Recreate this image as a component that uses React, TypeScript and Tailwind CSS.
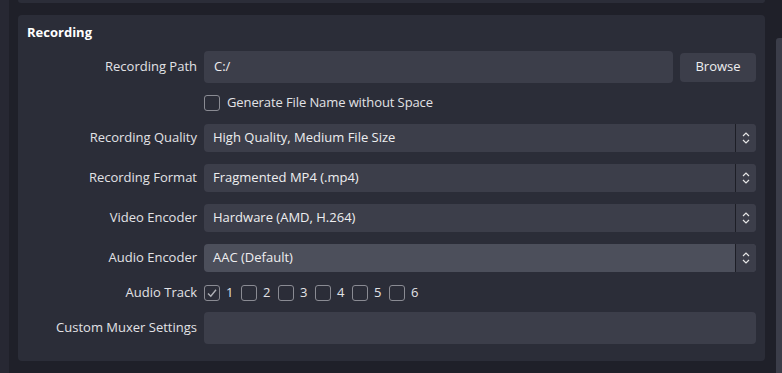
import React from "react";

const Chevrons = () => (
  <svg width="10" height="14" viewBox="0 0 10 14" fill="none" stroke="#e6e6e6" strokeWidth="1.2">
    <path d="M2 5 L5 2 L8 5" />
    <path d="M2 9 L5 12 L8 9" />
  </svg>
);

const Select = ({ value, active }: { value: string; active?: boolean }) => (
  <div className={`flex h-[28px] flex-1 items-stretch rounded-[4px] ${active ? "bg-[#4c4f5b]" : "bg-[#3c3e4a]"}`}>
    <div className="flex flex-1 items-center pl-[9px] text-[13px] text-[#eeeef0]">{value}</div>
    <div className="w-px bg-[#1d1e26]" />
    <div className="flex w-[20px] items-center justify-center rounded-r-[4px] bg-[#3c3e4a]">
      <Chevrons />
    </div>
  </div>
);

const Box = ({ checked }: { checked?: boolean }) => (
  <div className="flex h-[16px] w-[16px] shrink-0 items-center justify-center rounded-[3px] border-[1.5px] border-[#8a8b93]">
    {checked && (
      <svg width="12" height="12" viewBox="0 0 12 12" fill="none" stroke="#b0b1b7" strokeWidth="1.4">
        <path d="M2 6.5 L4.8 9.2 L10 2.8" />
      </svg>
    )}
  </div>
);

const Label = ({ children }: { children: React.ReactNode }) => (
  <div className="w-[170px] shrink-0 text-right text-[13px] text-[#e2e2e6]">{children}</div>
);

export default function App() {
  return (
    <div
      className="flex h-[373px] w-[782px] overflow-hidden bg-[#1f2029]"
      style={{ fontFamily: '"Open Sans", "Liberation Sans", sans-serif' }}
    >
      <div className="w-[9px] shrink-0 bg-[#272833]" />
      <div className="w-[9px] shrink-0" />
      <div className="flex w-[747px] shrink-0 flex-col">
        <div className="h-[3px] rounded-b-[4px] bg-[#2b2d38]" />
        <div className="mt-[12px] flex h-[346px] flex-col rounded-[4px] bg-[#2b2d38] pl-[9px] pr-[9px]">
          <div className="mt-[8px] h-[18px] text-[13px] font-bold leading-[18px] text-white">Recording</div>
          {/* Recording Path */}
          <div className="mt-[10px] flex h-[32px] items-center gap-[7px]">
            <Label>Recording Path</Label>
            <div className="flex h-[32px] flex-1 items-center rounded-[4px] bg-[#3c3e4a] pl-[10px] text-[13px] text-[#eeeef0]">
              C:/
            </div>
            <div className="flex h-[29px] w-[76px] items-center justify-center rounded-[4px] bg-[#3c3e4a] text-[13px] text-[#eeeef0]">
              Browse
            </div>
          </div>
          {/* Checkbox */}
          <div className="mt-[12px] flex h-[16px] items-center gap-[7px]">
            <div className="w-[170px] shrink-0" />
            <Box />
            <span className="text-[13px] tracking-[-0.1px] text-[#e2e2e6]">Generate File Name without Space</span>
          </div>
          <div className="mt-[13px] flex h-[28px] items-center gap-[7px]">
            <Label>Recording Quality</Label>
            <Select value="High Quality, Medium File Size" />
          </div>
          <div className="mt-[12px] flex h-[28px] items-center gap-[7px]">
            <Label>Recording Format</Label>
            <Select value="Fragmented MP4 (.mp4)" />
          </div>
          <div className="mt-[12px] flex h-[28px] items-center gap-[7px]">
            <Label>Video Encoder</Label>
            <Select value="Hardware (AMD, H.264)" />
          </div>
          <div className="mt-[12px] flex h-[28px] items-center gap-[7px]">
            <Label>Audio Encoder</Label>
            <Select value="AAC (Default)" active />
          </div>
          <div className="mt-[13px] flex h-[16px] items-center gap-[7px]">
            <Label>Audio Track</Label>
            <div className="flex items-center">
              {[1, 2, 3, 4, 5, 6].map((n) => (
                <div key={n} className="flex w-[37px] shrink-0 items-center gap-[6px]">
                  <Box checked={n === 1} />
                  <span className="text-[13px] text-[#e2e2e6]">{n}</span>
                </div>
              ))}
            </div>
          </div>
          <div className="mt-[11px] flex h-[32px] items-center gap-[7px]">
            <Label>Custom Muxer Settings</Label>
            <div className="h-[32px] flex-1 rounded-[4px] bg-[#3c3e4a]" />
          </div>
        </div>
      </div>
      <div className="w-[11px] shrink-0" />
      <div className="flex w-[6px] shrink-0 flex-col">
        <div className="h-[38px]" />
        <div className="flex-1 rounded-tl-[3px] bg-[#3b3d49]" />
      </div>
    </div>
  );
}
